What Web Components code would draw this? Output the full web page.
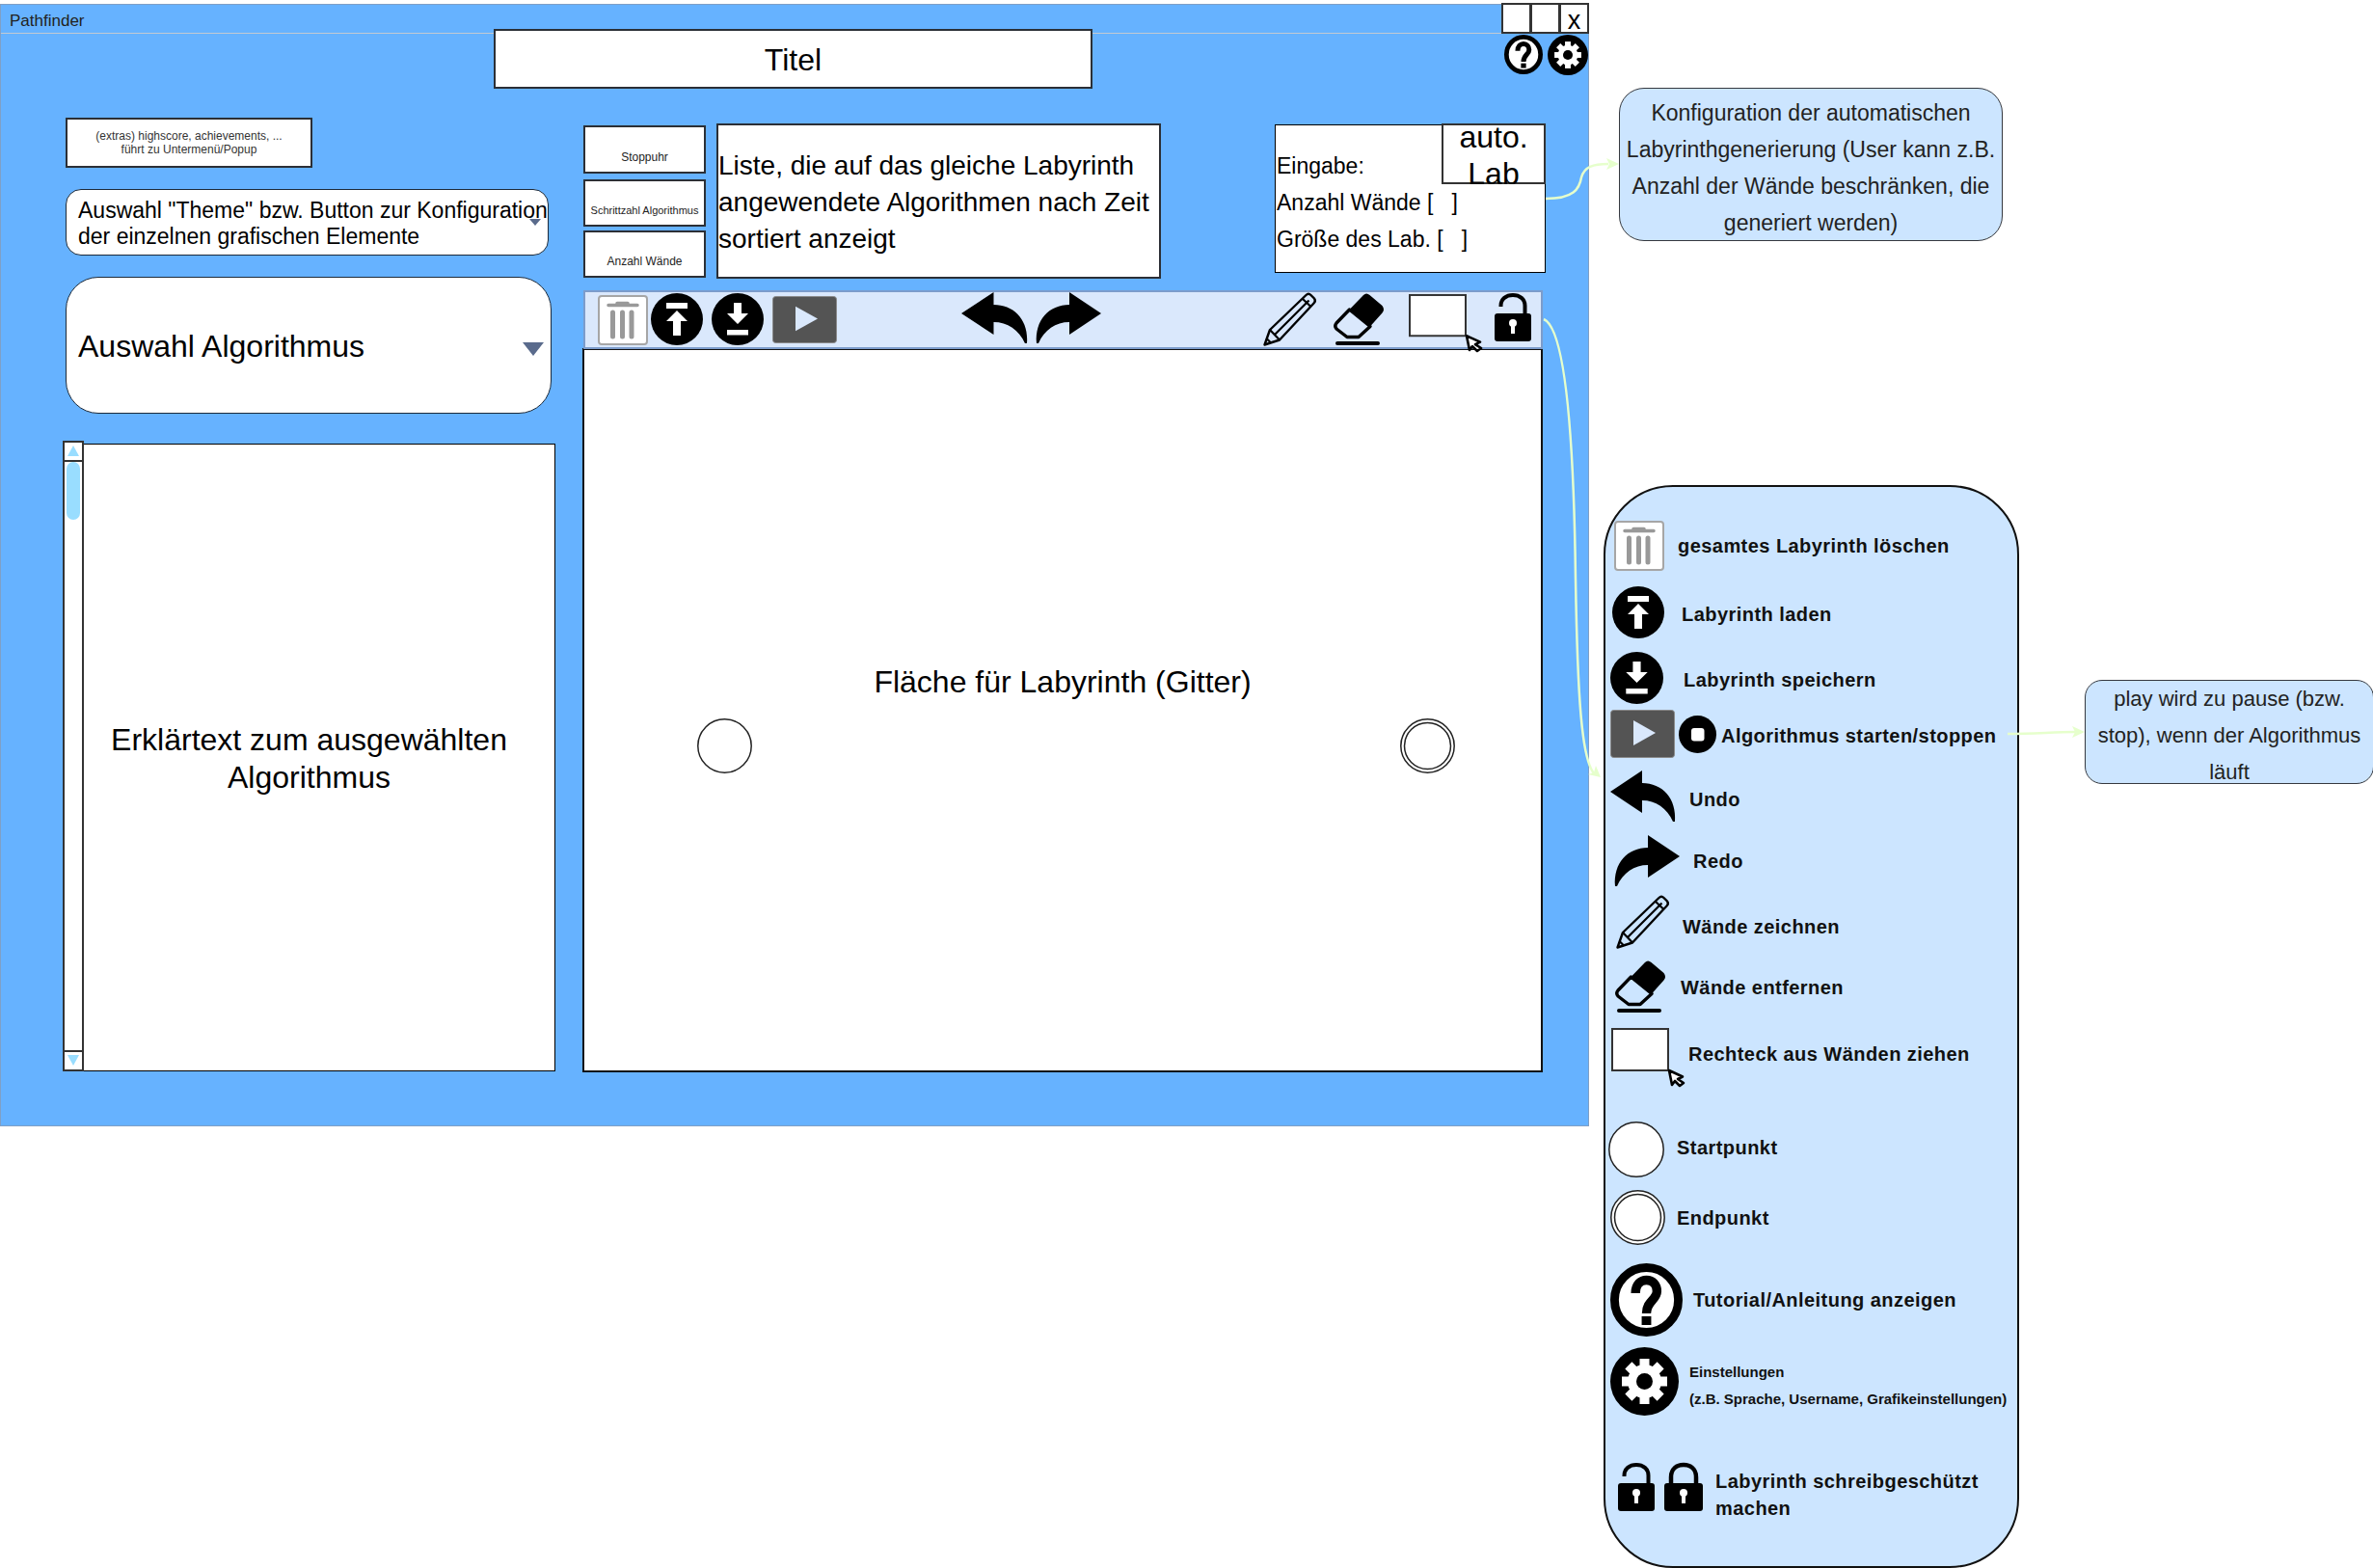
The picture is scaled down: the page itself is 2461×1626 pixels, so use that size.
<!DOCTYPE html>
<html lang="de">
<head>
<meta charset="utf-8">
<title>Pathfinder</title>
<style>
  html, body { margin: 0; background: #fff; }
  body { font-family: "Liberation Sans", Arial, sans-serif; color: #000; width: 2461px; height: 1626px; overflow: hidden; position: relative; }
  #page { display: flex; align-items: flex-start; }
</style>
</head>
<body>
<div id="page">
  <pf-window title-text="Pathfinder">
    <pf-box slot="title" w="621" h="62" size="32" shift="1" style="margin-left:511px">Titel</pf-box>
    <pf-icon slot="tools" name="help" w="40" h="41"></pf-icon>
    <pf-icon slot="tools" name="gear" w="42" h="42" style="margin-left:5px"></pf-icon>

    <pf-box slot="left" w="256" h="52" size="12" color="#333" style="margin-left:3px">(extras) highscore, achievements, ...<br>führt zu Untermenü/Popup</pf-box>
    <pf-select slot="left" w="501" h="69" size="23" radius="16" arrow="small" style="margin:22px 0 0 3px">Auswahl "Theme" bzw. Button zur Konfiguration<br>der einzelnen grafischen Elemente</pf-select>
    <pf-select slot="left" w="504" h="142" size="32" radius="34" arrow="big" style="margin:22px 0 0 3px">Auswahl Algorithmus</pf-select>
    <pf-scrolltext slot="left" style="margin-top:29px">Erklärtext zum ausgewählten<br>Algorithmus</pf-scrolltext>

    <pf-stats slot="top">
      <pf-box w="127" h="50" size="12" color="#222" shift="8">Stoppuhr</pf-box>
      <pf-box w="127" h="49" size="11" color="#222" shift="8" style="margin-top:6px">Schrittzahl Algorithmus</pf-box>
      <pf-box w="127" h="49" size="12" color="#222" shift="8" style="margin-top:4px">Anzahl Wände</pf-box>
    </pf-stats>
    <pf-box slot="top" w="461" h="161" size="28" line="38" shift="2" align="left" style="margin:-2px 0 0 11px">Liste, die auf das gleiche Labyrinth<br>angewendete Algorithmen nach Zeit<br>sortiert anzeigt</pf-box>
    <pf-config slot="top" style="margin:-1px 0 0 118px"></pf-config>

    <pf-toolbar slot="board">
      <pf-icon name="trash" w="52" h="52" style="margin:3px 0 0 13px"></pf-icon>
      <pf-icon name="load" w="54" h="54" style="margin:1px 0 0 3px"></pf-icon>
      <pf-icon name="save" w="54" h="54" style="margin:1px 0 0 9px"></pf-icon>
      <pf-icon name="play" w="67" h="49" style="margin:4px 0 0 9px"></pf-icon>
      <pf-icon name="undo" w="69" h="53" style="margin:0 0 0 129px"></pf-icon>
      <pf-icon name="redo" w="68" h="53" style="margin:0 0 0 8px"></pf-icon>
      <pf-icon name="pencil" w="55" h="56" style="margin:0 0 0 168px"></pf-icon>
      <pf-icon name="eraser" w="53" h="55" style="margin:1px 0 0 18px"></pf-icon>
      <pf-icon name="rectdrag" w="75" h="58" style="margin:2px 0 0 25px"></pf-icon>
      <pf-icon name="lockopen" w="38" h="50" style="margin:1px 0 0 14px"></pf-icon>
    </pf-toolbar>
    <pf-board slot="board">Fläche für Labyrinth (Gitter)</pf-board>
  </pf-window>

  <div style="margin:91px 0 0 15px;display:flex;flex-direction:column;align-items:flex-start">
    <pf-note w="398" h="159" radius="26" size="23" pad="6" style="margin-left:16px">Konfiguration der automatischen<br>Labyrinthgenerierung (User kann z.B.<br>Anzahl der Wände beschränken, die<br>generiert werden)</pf-note>
    <pf-legend style="margin-top:253px">
      <pf-row top="35" x="9" gap="14"><pf-icon slot="icon" name="trash" w="52" h="52"></pf-icon>gesamtes Labyrinth löschen</pf-row>
      <pf-row top="16" x="7" gap="18" shift="2"><pf-icon slot="icon" name="load" w="54" h="54"></pf-icon>Labyrinth laden</pf-row>
      <pf-row top="14" x="5" gap="21" shift="2"><pf-icon slot="icon" name="save" w="55" h="54"></pf-icon>Labyrinth speichern</pf-row>
      <pf-row top="6" x="5" gap="5" shift="2"><pf-icon slot="icon" name="play" w="67" h="50"></pf-icon><pf-icon slot="icon" name="stop" w="39" h="39" style="margin-left:4px"></pf-icon>Algorithmus starten/stoppen</pf-row>
      <pf-row top="13" x="5" gap="14" shift="4"><pf-icon slot="icon" name="undo" w="68" h="53"></pf-icon>Undo</pf-row>
      <pf-row top="14" x="9" gap="14" shift="1"><pf-icon slot="icon" name="redo" w="68" h="53"></pf-icon>Redo</pf-row>
      <pf-row top="9" x="11" gap="14" shift="5"><pf-icon slot="icon" name="pencil" w="55" h="56"></pf-icon>Wände zeichnen</pf-row>
      <pf-row top="12" x="10" gap="15" shift="1"><pf-icon slot="icon" name="eraser" w="53" h="55"></pf-icon>Wände entfernen</pf-row>
      <pf-row top="15" x="6" gap="5" shift="-2"><pf-icon slot="icon" name="rectdrag" w="75" h="59"></pf-icon>Rechteck aus Wänden ziehen</pf-row>
      <pf-row top="38" x="3" gap="13" shift="-2"><pf-icon slot="icon" name="start" w="58" h="58"></pf-icon>Startpunkt</pf-row>
      <pf-row top="13" x="5" gap="12" shift="1"><pf-icon slot="icon" name="end" w="57" h="57"></pf-icon>Endpunkt</pf-row>
      <pf-row top="19" x="5" gap="11"><pf-icon slot="icon" name="help" w="75" h="76"></pf-icon>Tutorial/Anleitung anzeigen</pf-row>
      <pf-row top="11" x="5" gap="11" shift="4" size="15" line="28" spacing="0"><pf-icon slot="icon" name="gear" w="71" h="71"></pf-icon>Einstellungen<br>(z.B. Sprache, Username, Grafikeinstellungen)</pf-row>
      <pf-row top="46" x="13" gap="13" shift="8" line="28"><pf-icon slot="icon" name="lockopen" w="38" h="50"></pf-icon><pf-icon slot="icon" name="lockclosed" w="40" h="50" style="margin-left:10px"></pf-icon>Labyrinth schreibgeschützt<br>machen</pf-row>
    </pf-legend>
  </div>

  <pf-note w="300" h="108" radius="18" size="22" pad="0" style="margin:705px 0 0 68px">play wird zu pause (bzw.<br>stop), wenn der Algorithmus<br>läuft</pf-note>
</div>
<pf-connectors></pf-connectors>

<script>
const GEAR_TEETH = [0, 45, 90, 135, 180, 225, 270, 315]
  .map(a => `<rect x="30.5" y="12" width="10" height="12" fill="#fff" transform="rotate(${a} 35.5 35.5)"/>`).join('');

const ICONS = {
  trash: { vb: '0 0 52 52', svg: `
    <rect x="1" y="1" width="50" height="50" rx="3" fill="#fff" stroke="#a6a6a6" stroke-width="2"/>
    <path d="M11 10.5H41M20 8.5H31" stroke="#999" stroke-width="3.5" stroke-linecap="round"/>
    <path d="M15.5 18V43M25.5 18V43M35 18V43" stroke="#999" stroke-width="5" stroke-linecap="round"/>` },
  load: { vb: '0 0 54 54', svg: `
    <circle cx="27" cy="27" r="27"/>
    <rect x="16" y="10" width="22" height="6" fill="#fff"/>
    <path d="M27 18L38 29H31V44H23V29H16Z" fill="#fff"/>` },
  save: { vb: '0 0 54 54', svg: `
    <circle cx="27" cy="27" r="27"/>
    <path d="M23 10H31V21H38L27 32L16 21H23Z" fill="#fff"/>
    <rect x="16" y="38" width="22" height="5.5" fill="#fff"/>` },
  play: { vb: '0 0 67 50', svg: `
    <rect x=".5" y=".5" width="66" height="49" rx="3" fill="#545454" stroke="#8a8a8a"/>
    <path d="M24 11L47 24L24 37Z" fill="#dae8fc"/>` },
  stop: { vb: '0 0 39 39', svg: `
    <circle cx="19.5" cy="19.5" r="19.5"/>
    <rect x="13" y="13" width="13.5" height="13.5" rx="3" fill="#fff"/>` },
  undo: { vb: '0 0 68 53', svg: `<path d="M0 22L33 0V13C54 13 69 29 67 53H65C59 39 47 31 33 31V44Z"/>` },
  redo: { vb: '0 0 68 53', svg: `<path d="M68 22L35 0V13C14 13 -1 29 1 53H3C9 39 21 31 35 31V44Z"/>` },
  pencil: { vb: '0 0 55 56', svg: `
    <path d="M1.5 54.5L7 39L44.5 3Q47 .5 49.5 3L53 6.500Q55 9 52.500 11.500L17 49.500Z" fill="none" stroke="#000" stroke-width="2.4" stroke-linejoin="round"/>
    <path d="M7 39L17 49.500M12 44L47.500 8.500M40.500 6.500L49.500 15M3.500 48L8 52.500" fill="none" stroke="#000" stroke-width="2.2"/>` },
  eraser: { vb: '0 0 53 55', svg: `
    <path d="M16.500 17L31 2Q34 -1 37.500 2L50.500 13Q53.500 17 50.500 20.500L38 34.500Z"/>
    <path d="M16.500 17L3 31Q.5 34 3 37L14 45.500H26L38 34.500Z" fill="none" stroke="#000" stroke-width="3.400" stroke-linejoin="round"/>
    <rect x="2" y="50" width="46" height="4" rx="2"/>` },
  rectdrag: { vb: '0 0 75 59', svg: `
    <rect x="1" y="1" width="58" height="43" fill="#fff" stroke="#333" stroke-width="2"/>
    <path d="M60 44L74 50.500L69 53L75 57L71 60L66 55L63 59Z" fill="#fff" stroke="#000" stroke-width="2.600" stroke-linejoin="round"/>` },
  lockopen: { vb: '0 0 38 50', svg: `
    <path d="M6.500 14V13C6.500 6 12 2 19 2C26 2 31.500 6 31.500 13V23" fill="none" stroke="#000" stroke-width="4"/>
    <rect y="21" width="38" height="29" rx="3"/>
    <circle cx="19" cy="31" r="4" fill="#fff"/>
    <rect x="17" y="31" width="4" height="11" fill="#fff"/>` },
  lockclosed: { vb: '0 0 40 50', svg: `
    <path d="M7 23V15C7 6 13 2 20 2C27 2 33 6 33 15V23" fill="none" stroke="#000" stroke-width="4.500"/>
    <rect y="21" width="40" height="29" rx="3"/>
    <circle cx="20" cy="31" r="4" fill="#fff"/>
    <rect x="18" y="31" width="4" height="11" fill="#fff"/>` },
  start: { vb: '0 0 58 58', svg: `<circle cx="29" cy="29" r="28.200" fill="#fff" stroke="#222" stroke-width="1.500"/>` },
  end: { vb: '0 0 57 57', svg: `
    <circle cx="28.500" cy="28.500" r="27.700" fill="#fff" stroke="#222" stroke-width="1.500"/>
    <circle cx="28.500" cy="28.500" r="24" fill="#fff" stroke="#222" stroke-width="1.500"/>` },
  help: { vb: '0 0 76 76', svg: `
    <circle cx="38" cy="38" r="33.500" fill="#fff" stroke="#000" stroke-width="9"/>
    <path d="M26.500 31C26.500 22 32 17.500 38 17.500C45 17.500 49 23 49 29C49 38 38 39 38 52" fill="none" stroke="#000" stroke-width="9.500"/>
    <rect x="33" y="55" width="10" height="9"/>` },
  gear: { vb: '0 0 71 71', svg: `
    <circle cx="35.500" cy="35.500" r="35.500"/>
    ${GEAR_TEETH}
    <circle cx="35.500" cy="35.500" r="17.500" fill="#fff"/>
    <circle cx="35.500" cy="35.500" r="8.500"/>` },
};

class PfIcon extends HTMLElement {
  connectedCallback() {
    const icon = ICONS[this.getAttribute('name')];
    const w = this.getAttribute('w'), h = this.getAttribute('h');
    this.attachShadow({ mode: 'open' }).innerHTML = `
      <style>:host { display: block; flex: none; width: ${w}px; height: ${h}px; } svg { display: block; overflow: visible; }</style>
      <svg width="${w}" height="${h}" viewBox="${icon.vb}" preserveAspectRatio="none">${icon.svg}</svg>`;
  }
}

class PfWindow extends HTMLElement {
  connectedCallback() {
    this.attachShadow({ mode: 'open' }).innerHTML = `
      <style>
        :host { display: block; flex: none; box-sizing: border-box; width: 1648px; height: 1164px; margin-top: 4px;
                background: #66b2ff; border: 1px solid #7f9fc6; }
        .head { display: flex; justify-content: space-between; height: 29px; border-bottom: 1.500px solid #c3c9d2; }
        .name { font-size: 17px; color: #222; padding: 7px 0 0 9px; }
        .controls { display: flex; margin: -2px -1px 0 0; height: 32px; }
        .controls div { box-sizing: border-box; width: 31px; margin-left: -1px; background: #fff; border: 2px solid #333;
                        font-size: 27px; line-height: 32px; text-align: center; }
        .titlerow { display: flex; margin-top: -5px; }
        .tools { display: flex; margin: 6px 0 0 427px; }
        .main { display: flex; margin-top: 29.500px; }
        .left { display: flex; flex-direction: column; align-items: flex-start; width: 511px; margin-left: 64px; }
        .right { margin-left: 28px; padding-top: 8px; }
        .top { display: flex; align-items: flex-start; height: 160px; margin-left: 1px; }
        .board { margin-top: 11px; }
      </style>
      <div class="head">
        <div class="name">${this.getAttribute('title-text')}</div>
        <div class="controls"><div></div><div></div><div>x</div></div>
      </div>
      <div class="titlerow"><slot name="title"></slot><div class="tools"><slot name="tools"></slot></div></div>
      <div class="main">
        <div class="left"><slot name="left"></slot></div>
        <div class="right">
          <div class="top"><slot name="top"></slot></div>
          <div class="board"><slot name="board"></slot></div>
        </div>
      </div>`;
  }
}

class PfBox extends HTMLElement {
  connectedCallback() {
    const a = n => this.getAttribute(n);
    const left = a('align') === 'left';
    this.attachShadow({ mode: 'open' }).innerHTML = `
      <style>
        :host { display: flex; flex: none; box-sizing: border-box; width: ${a('w')}px; height: ${a('h')}px; background: #fff;
                border: 2.500px solid #2b2f36; align-items: center; justify-content: ${left ? 'flex-start' : 'center'};
                text-align: ${left ? 'left' : 'center'}; font-size: ${a('size')}px; color: ${a('color') || '#000'};
                ${a('line') ? `line-height: ${a('line')}px;` : ''} }
        div { position: relative; top: ${a('shift') || 0}px; white-space: nowrap; }
      </style>
      <div><slot></slot></div>`;
  }
}

class PfSelect extends HTMLElement {
  connectedCallback() {
    const a = n => this.getAttribute(n);
    const big = a('arrow') === 'big';
    this.attachShadow({ mode: 'open' }).innerHTML = `
      <style>
        :host { display: flex; flex: none; align-items: center; box-sizing: border-box; position: relative; width: ${a('w')}px; height: ${a('h')}px;
                background: #fff; border: 1.500px solid #1c2a3a; border-radius: ${a('radius')}px; padding-left: 12px;
                font-size: ${a('size')}px; ${big ? '' : 'line-height: 27px;'} }
        div { white-space: nowrap; margin-top: ${big ? 4 : 3}px; }
        i { position: absolute; width: 0; height: 0; border-style: solid; border-color: #5a6b8c transparent transparent;
            ${big ? 'right: 7px; top: 67px; border-width: 14px 11.500px 0;' : 'right: 7px; top: 30px; border-width: 7px 6.500px 0;'} }
      </style>
      <div><slot></slot></div><i></i>`;
  }
}

class PfScrolltext extends HTMLElement {
  connectedCallback() {
    this.attachShadow({ mode: 'open' }).innerHTML = `
      <style>
        :host { display: flex; flex: none; width: 511px; height: 653px; }
        .bar { box-sizing: border-box; width: 22px; margin-top: -1px; border: 2.500px solid #333; background: #fff; position: relative; z-index: 1; }
        .up, .down { height: 18px; border-bottom: 2px solid #333; display: flex; align-items: center; justify-content: center; }
        .down { position: absolute; left: 0; right: 0; bottom: 0; border-bottom: 0; border-top: 2px solid #333; }
        .up i, .down i { width: 0; height: 0; border: 6px solid transparent; }
        .up i { border-top: 0; border-bottom: 11px solid #99ddff; }
        .down i { border-bottom: 0; border-top: 11px solid #99ddff; }
        .thumb { width: 14px; height: 60px; margin: 0 0 0 1.500px; background: #99ddff; border-radius: 7px; }
        .text { flex: 1; box-sizing: border-box; margin-top: 2px; margin-left: -1px; display: flex; align-items: center; justify-content: center;
                text-align: center; background: #fff; border: 1.500px solid #000; font-size: 32px; line-height: 39px; padding: 4px 21px 0 0; }
      </style>
      <div class="bar"><div class="up"><i></i></div><div class="thumb"></div><div class="down"><i></i></div></div>
      <div class="text"><div><slot></slot></div></div>`;
  }
}

class PfStats extends HTMLElement {
  connectedCallback() {
    this.attachShadow({ mode: 'open' }).innerHTML = `
      <style>:host { display: flex; flex: none; flex-direction: column; }</style><slot></slot>`;
  }
}

class PfConfig extends HTMLElement {
  connectedCallback() {
    this.attachShadow({ mode: 'open' }).innerHTML = `
      <style>
        :host { display: block; flex: none; box-sizing: border-box; position: relative; width: 281px; height: 154px; background: #fff;
                border: 1.500px solid #000; font-size: 23px; line-height: 38px; padding: 23px 0 0 1px; white-space: nowrap; }
        .auto { position: absolute; top: -1.500px; right: -1px; box-sizing: border-box; width: 108px; height: 63px; background: transparent;
                border: 2.500px solid #333; font-size: 32px; line-height: 37.500px; text-align: center; }
        .auto div { margin-top: -6px; }
      </style>
      <div>Eingabe:</div>
      <div>Anzahl Wände [&nbsp;&nbsp;&nbsp;]</div>
      <div>Größe des Lab. [&nbsp;&nbsp;&nbsp;]</div>
      <div class="auto"><div>auto.<br>Lab</div></div>`;
  }
}

class PfToolbar extends HTMLElement {
  connectedCallback() {
    this.attachShadow({ mode: 'open' }).innerHTML = `
      <style>
        :host { display: flex; align-items: flex-start; box-sizing: border-box; position: relative; z-index: 1; width: 995px; height: 61px;
                margin-left: 1px; background: #dae8fc; border: 2px solid #7c9ccb; }
      </style><slot></slot>`;
  }
}

class PfBoard extends HTMLElement {
  connectedCallback() {
    this.attachShadow({ mode: 'open' }).innerHTML = `
      <style>
        :host { display: flex; align-items: center; justify-content: center; box-sizing: border-box; position: relative; width: 996px; height: 751px;
                margin-top: -1px; background: #fff; border: 2px solid #111; font-size: 32px; padding-bottom: 57px; }
        .dot { position: absolute; top: 382px; }
      </style>
      <slot></slot>
      <pf-icon class="dot" name="start" w="57" h="57" style="left:117px"></pf-icon>
      <pf-icon class="dot" name="end" w="57" h="57" style="left:846px"></pf-icon>`;
  }
}

class PfNote extends HTMLElement {
  connectedCallback() {
    const a = n => this.getAttribute(n);
    this.attachShadow({ mode: 'open' }).innerHTML = `
      <style>
        :host { display: block; flex: none; box-sizing: border-box; width: ${a('w')}px; height: ${a('h')}px; background: #cce5ff;
                border: 1.500px solid #36393f; border-radius: ${a('radius')}px; padding-top: ${a('pad')}px; font-size: ${a('size')}px; line-height: 38px;
                text-align: center; white-space: nowrap; color: #222; }
      </style><slot></slot>`;
  }
}

class PfLegend extends HTMLElement {
  connectedCallback() {
    this.attachShadow({ mode: 'open' }).innerHTML = `
      <style>
        :host { display: flex; flex-direction: column; box-sizing: border-box; width: 431px; height: 1123px; background: #cce5ff;
                border: 2px solid #111; border-radius: 72px; }
      </style><slot></slot>`;
  }
}

class PfRow extends HTMLElement {
  connectedCallback() {
    const a = n => this.getAttribute(n);
    this.attachShadow({ mode: 'open' }).innerHTML = `
      <style>
        :host { display: flex; align-items: center; margin: ${a('top')}px 0 0 ${a('x')}px; font-weight: bold; font-size: ${a('size') || 20}px;
                letter-spacing: ${a('spacing') || 0.45}px; color: #111; white-space: nowrap; ${a('line') ? `line-height: ${a('line')}px;` : ''} }
        .text { margin-left: ${a('gap')}px; position: relative; top: ${a('shift') || 0}px; }
        .icons { display: flex; align-items: center; }
      </style>
      <div class="icons"><slot name="icon"></slot></div><div class="text"><slot></slot></div>`;
  }
}

class PfConnectors extends HTMLElement {
  connectedCallback() {
    this.attachShadow({ mode: 'open' }).innerHTML = `
      <style>
        :host { position: absolute; left: 0; top: 0; width: 2461px; height: 1626px; pointer-events: none; }
        path { fill: none; stroke: #e6ffcc; stroke-width: 2.500; }
        polygon { fill: #e6ffcc; }
      </style>
      <svg width="2461" height="1626">
        <path d="M1603 206C1632 206 1638 196 1640 184C1643 173 1652 170 1668 170"/>
        <polygon points="1679,170 1666,164 1669,170 1666,176"/>
        <path d="M1601 331C1622 340 1632 440 1634 600C1636 720 1640 790 1654 803"/>
        <polygon points="1660,806 1655,794 1653,801 1647,803"/>
        <path d="M2082 761C2110 761 2130 759 2152 759"/>
        <polygon points="2162,759 2149,753 2152,759 2149,765"/>
      </svg>`;
  }
}

customElements.define('pf-icon', PfIcon);
customElements.define('pf-window', PfWindow);
customElements.define('pf-box', PfBox);
customElements.define('pf-select', PfSelect);
customElements.define('pf-scrolltext', PfScrolltext);
customElements.define('pf-stats', PfStats);
customElements.define('pf-config', PfConfig);
customElements.define('pf-toolbar', PfToolbar);
customElements.define('pf-board', PfBoard);
customElements.define('pf-note', PfNote);
customElements.define('pf-legend', PfLegend);
customElements.define('pf-row', PfRow);
customElements.define('pf-connectors', PfConnectors);
</script>
</body>
</html>
